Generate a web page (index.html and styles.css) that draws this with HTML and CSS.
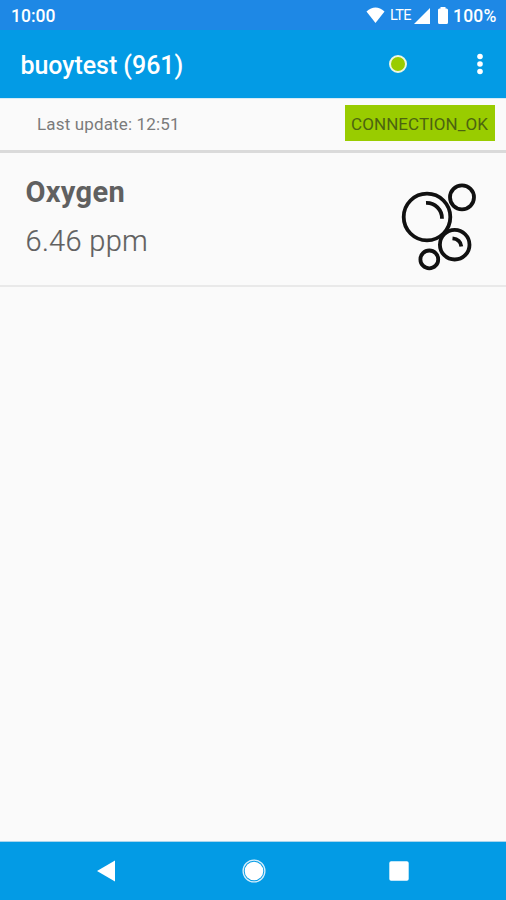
FILE: index.html
```html
<!DOCTYPE html>
<html lang="en">
<head>
<meta charset="utf-8">
<meta name="viewport" content="width=device-width">
<title>buoytest (961)</title>
<link rel="stylesheet" href="styles.css">
</head>
<body>
<div class="status-bar">
  <span class="clock">10:00</span>
  <svg class="wifi" width="19" height="17" viewBox="0 0 20 17" preserveAspectRatio="none"><path d="M.5 4.5Q10-3.5 19.500 4.500L10 16Z" fill="#fff"/></svg>
  <span class="lte">LTE</span>
  <svg class="signal" width="16" height="16" viewBox="0 0 16 16"><path d="M16 0V16H0Z" fill="#fff"/></svg>
  <svg class="battery" width="10" height="17" viewBox="0 0 10 17"><path d="M2.500 0H7.500V1.500H8.500Q10 1.500 10 3V15.500Q10 17 8.500 17H1.500Q0 17 0 15.500V3Q0 1.500 1.500 1.500H2.500Z" fill="#fff"/></svg>
  <span class="percent">100%</span>
</div>
<header class="app-bar">
  <h1 class="title">buoytest (961)</h1>
  <span class="indicator"></span>
  <svg class="menu" width="6" height="22" viewBox="0 0 6 22" fill="#fff"><circle cx="3" cy="3.500" r="2.800"/><circle cx="3" cy="11" r="2.800"/><circle cx="3" cy="18.500" r="2.800"/></svg>
</header>
<section class="connection">
  <span class="updated">Last update: 12:51</span>
  <span class="badge">CONNECTION_OK</span>
</section>
<main class="content">
  <article class="sensor">
    <div class="reading">
      <h2 class="name">Oxygen</h2>
      <p class="value">6.46 ppm</p>
    </div>
    <svg class="bubbles" width="78" height="90" viewBox="400 182 78 90" fill="none" stroke="#111" stroke-width="3.800">
      <circle cx="427" cy="217" r="23.300"/>
      <circle cx="462" cy="197.300" r="12"/>
      <circle cx="454.700" cy="244.700" r="14.800"/>
      <circle cx="429.300" cy="259.400" r="8.900"/>
      <path d="M426 202.800A15.500 15.500 0 0 1 442 218.800M452.500 238.300Q460.500 239 461.300 246.500"/>
    </svg>
  </article>
</main>
<nav class="nav-bar">
  <svg width="18" height="22" viewBox="0 0 18 22"><path d="M0 11L18 .5V21.500Z" fill="#fff"/></svg>
  <svg class="home" width="24" height="24" viewBox="0 0 24 24"><circle cx="12" cy="12" r="10.900" fill="none" stroke="#d5edfb" stroke-width="1.300"/><circle cx="12" cy="12" r="9.300" fill="#fff"/></svg>
  <svg width="20" height="20" viewBox="0 0 20 20"><rect x=".3" y=".3" width="19.400" height="19.400" rx="1.800" fill="#fff"/></svg>
</nav>
</body>
</html>
```
FILE: styles.css
```css
* { box-sizing: border-box; }
body {
  margin: 0;
  height: 900px;
  display: flex;
  flex-direction: column;
  overflow: hidden;
  background: #fafafa;
  font-family: Roboto, "Liberation Sans", sans-serif;
}
h1, h2, p { margin: 0; }
svg { display: block; flex: none; }
span, h1, h2, p { white-space: nowrap; }
.status-bar {
  height: 30px;
  flex: none;
  display: flex;
  align-items: center;
  padding: 1px 9px 0 11px;
  background: #1e88e5;
  color: #fff;
}
.clock { font-size: 17.5px; font-weight: 500; margin-right: auto; }
.wifi { margin-right: 5px; }
.lte { font-size: 14.5px; width: 22px; letter-spacing: -0.6px; }
.signal { margin: 0 8px 0 2px; }
.battery { margin-right: 5px; }
.percent { font-size: 17.5px; font-weight: 500; width: 44px; letter-spacing: 0.2px; }
.app-bar {
  height: 68px;
  flex: none;
  display: flex;
  align-items: center;
  padding: 0 23px 0 20.5px;
  background: #039be5;
  color: #fff;
}
.title { font-size: 25px; line-height: 30px; font-weight: 500; margin-right: auto; padding-top: 3px; letter-spacing: -0.05px; }
.indicator {
  width: 18px;
  height: 18px;
  border: 2px solid #edf6df;
  border-radius: 50%;
  background: #99cc00;
  margin-right: 70px;
}
.connection {
  height: 55px;
  flex: none;
  display: flex;
  align-items: center;
  justify-content: space-between;
  padding: 0 11.5px 3px 37px;
  border-top: 1px solid #d5ebf6;
  border-bottom: 3px solid #dadada;
  color: #7b7b7b;
}
.updated { font-size: 17px; letter-spacing: 0.15px; padding-top: 2px; }
.badge {
  width: 150px;
  height: 36px;
  background: #99cc00;
  color: #4c6410;
  font-size: 17px;
  line-height: 39px;
  letter-spacing: 0.05px;
  text-align: center;
}
.content { flex: 1; }
.sensor {
  height: 134px;
  display: flex;
  justify-content: space-between;
  padding: 20px 28px 0 25.5px;
  border-bottom: 2px solid #e9e9e9;
  color: #606060;
}
.name { font-size: 29px; line-height: 38px; font-weight: 700; letter-spacing: 0.3px; }
.value { font-size: 29px; line-height: 36px; margin-top: 12px; font-weight: 300; letter-spacing: 0.3px; -webkit-text-stroke: 0.2px #606060; }
.bubbles { margin-top: 9px; }
.nav-bar {
  height: 59px;
  flex: none;
  display: flex;
  align-items: center;
  justify-content: space-between;
  padding: 0 97px;
  border-top: 1px solid #a9d5ed;
  background: #039be5;
}
.home { margin-left: 3px; }
```
